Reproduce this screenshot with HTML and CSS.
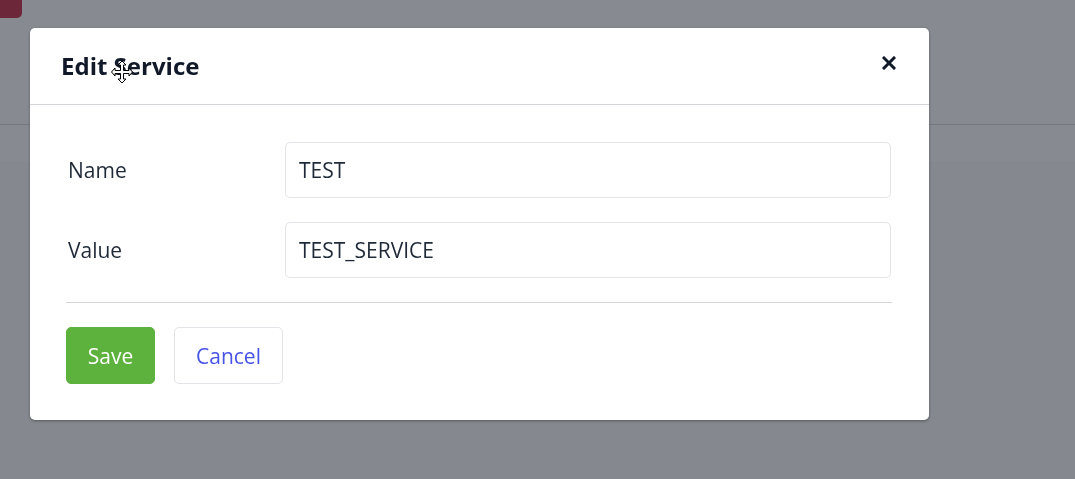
FILE: index.html
```html
<!DOCTYPE html>
<html lang="en">
<head>
<meta charset="utf-8">
<title>Edit Service</title>
<link rel="stylesheet" href="styles.css">
</head>
<body>
<div class="page">
  <header class="topbar"><span class="brand-chip"></span></header>
  <div class="subbar"></div>
  <main class="content"></main>
</div>

<div class="modal">
  <div class="modal-header">
    <h2 class="modal-title">Edit Service</h2>
    <button class="close-btn" aria-label="Close">
      <svg width="14" height="14" viewBox="0 0 14 14"><path d="M2 2 L12 12 M12 2 L2 12" stroke="#111827" stroke-width="3" stroke-linecap="square" fill="none"/></svg>
    </button>
  </div>
  <div class="modal-body">
    <div class="form-row">
      <label class="form-label">Name</label>
      <div class="form-input">TEST</div>
    </div>
    <div class="form-row">
      <label class="form-label">Value</label>
      <div class="form-input">TEST_SERVICE</div>
    </div>
    <hr class="divider">
    <div class="actions">
      <button class="btn btn-save">Save</button>
      <button class="btn btn-cancel">Cancel</button>
    </div>
  </div>
</div>

<svg class="cursor" width="22" height="24" viewBox="0 0 22 24">
  <path d="M11 1 L15 5 L12.5 5 L12.5 10.5 L18 10.5 L18 8 L21.5 12 L18 16 L18 13.5 L12.5 13.5 L12.5 19 L15 19 L11 23 L7 19 L9.5 19 L9.5 13.5 L4 13.5 L4 16 L0.5 12 L4 8 L4 10.5 L9.5 10.5 L9.5 5 L7 5 Z" fill="#fff" stroke="#000" stroke-width="1"/>
</svg>
</body>
</html>
```

FILE: styles.css
```css
* { box-sizing: border-box; }
html, body { margin: 0; padding: 0; }
body {
  width: 1075px;
  height: 479px;
  overflow: hidden;
  background: #85888f;
  font-family: "Open Sans", "Noto Sans", sans-serif;
}
.page { display: flex; flex-direction: column; height: 479px; }
.topbar {
  height: 125px;
  background: #878a91;
  border-bottom: 1px solid #75787f;
}
.brand-chip {
  display: block;
  width: 22px;
  height: 18px;
  background: #6c2839;
  border-bottom-right-radius: 5px;
}
.subbar { height: 36px; background: #878a91; }
.content { flex: 1; background: #85888f; }

.modal {
  position: fixed;
  left: 30px;
  top: 28px;
  width: 899px;
  background: #fff;
  border-radius: 5px;
  box-shadow: 0 1px 3px rgba(0,0,0,0.35);
}
.modal-header {
  height: 77px;
  display: flex;
  align-items: center;
  justify-content: space-between;
  padding: 0 33px 0 31px;
  border-bottom: 1px solid #d4d5d8;
}
.modal-title {
  margin: 0;
  font-size: 24px;
  font-weight: 700;
  color: #111827;
  padding-bottom: 1px;
}
.close-btn {
  border: none;
  background: none;
  padding: 0;
  width: 14px;
  height: 14px;
  display: flex;
  margin-top: -7px;
}
.modal-body { padding: 37px 37px 36px 36px; }
.form-row {
  display: grid;
  grid-template-columns: 219px 1fr;
  align-items: center;
  margin-bottom: 24px;
}
.form-label {
  font-size: 21px;
  font-weight: 500;
  color: #1f2937;
  padding-left: 2px;
}
.form-input {
  height: 56px;
  border: 1px solid #e3e4e8;
  border-radius: 5px;
  padding: 0 13px;
  display: flex;
  align-items: center;
  font-size: 21px;
  color: #1f2937;
  margin-right: 1px;
}
.divider {
  margin: 0;
  border: none;
  border-top: 1px solid #d4d5d8;
}
.actions { display: flex; gap: 19px; margin-top: 24px; }
.btn {
  height: 57px;
  border-radius: 5px;
  font-family: inherit;
  font-size: 21px;
  padding: 0;
}
.btn-save {
  background: #5db23d;
  border: 1px solid #5db23d;
  color: #fff;
  width: 89px;
}
.btn-cancel {
  background: #fff;
  border: 1px solid #e3e4e8;
  color: #4752e6;
  width: 109px;
}
.cursor {
  position: fixed;
  left: 111px;
  top: 60px;
}
```
